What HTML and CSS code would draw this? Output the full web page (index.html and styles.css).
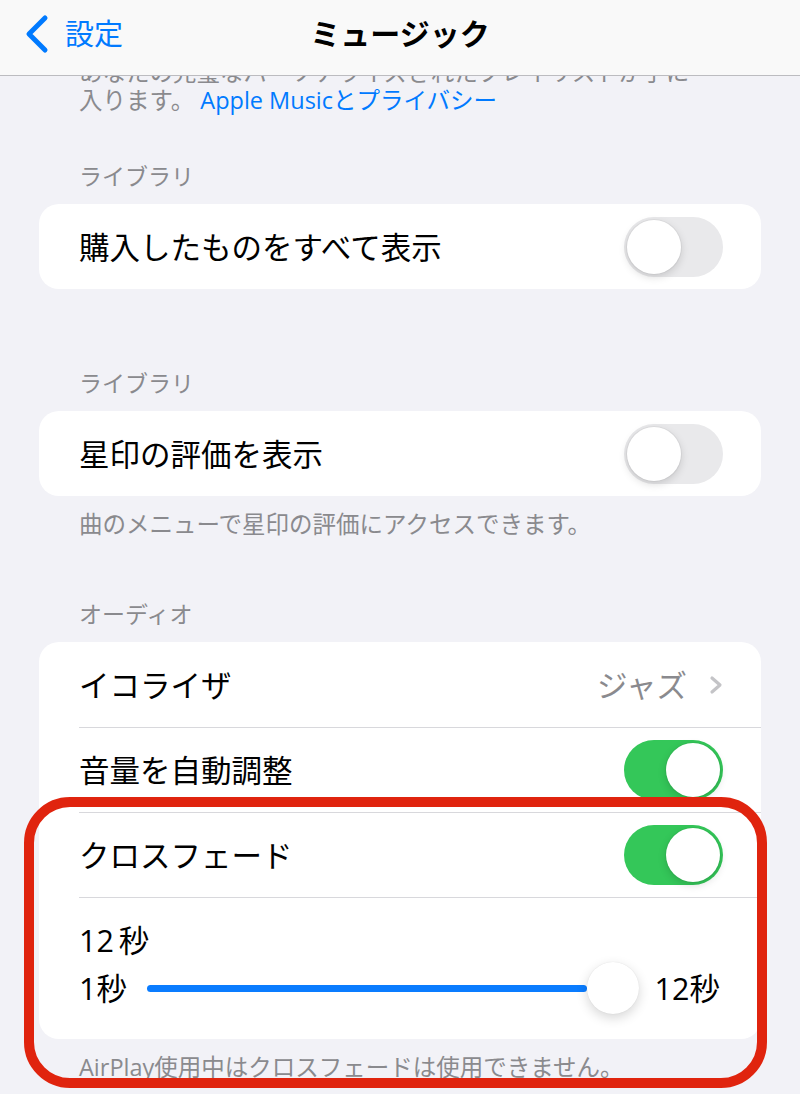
FILE: index.html
```html
<!DOCTYPE html>
<html lang="ja">
<head>
  <meta charset="UTF-8" />
  <title>ミュージック</title>
  <link rel="stylesheet" href="styles.css">
</head>
<body>
  <header class="nav">
    <a class="nav-back" href="#">
      <svg class="nav-chevron" width="26" height="40" viewBox="0 0 26 40">
        <path d="M21 4 L5 20 L21 36" fill="none" stroke="#007aff" stroke-width="5" stroke-linecap="round" stroke-linejoin="round"/>
      </svg>
      <span>設定</span>
    </a>
    <h1 class="nav-title">ミュージック</h1>
  </header>

  <main class="content">
    <p class="intro">
      あなたの完璧なパーソナライズされたプレイリストが手に<br>
      入ります。 <a class="link" href="#">Apple Musicとプライバシー</a>
    </p>

    <section class="group">
      <h2 class="group-header">ライブラリ</h2>
      <div class="card">
        <div class="row">
          <span class="row-label">購入したものをすべて表示</span>
          <span class="toggle"></span>
        </div>
      </div>
    </section>

    <section class="group group-spaced">
      <h2 class="group-header">ライブラリ</h2>
      <div class="card">
        <div class="row">
          <span class="row-label">星印の評価を表示</span>
          <span class="toggle"></span>
        </div>
      </div>
      <p class="group-footer">曲のメニューで星印の評価にアクセスできます。</p>
    </section>

    <section class="group">
      <h2 class="group-header">オーディオ</h2>
      <div class="card">
        <div class="row">
          <span class="row-label">イコライザ</span>
          <span class="row-value">
            ジャズ
            <svg width="14" height="20" viewBox="0 0 14 20">
              <path d="M3 3 L11 10 L3 17" fill="none" stroke="#c4c4c7" stroke-width="3.2" stroke-linecap="round" stroke-linejoin="round"/>
            </svg>
          </span>
        </div>
        <div class="row">
          <span class="row-label">音量を自動調整</span>
          <span class="toggle on"></span>
        </div>
        <div class="row">
          <span class="row-label">クロスフェード</span>
          <span class="toggle on"></span>
        </div>
        <div class="row slider-row">
          <div class="slider-value">12 秒</div>
          <div class="slider">
            <span class="slider-label">1秒</span>
            <div class="slider-track">
              <span class="slider-fill"></span>
              <span class="slider-knob"></span>
            </div>
            <span class="slider-label">12秒</span>
          </div>
        </div>
      </div>
      <p class="group-footer">AirPlay使用中はクロスフェードは使用できません。</p>
    </section>
  </main>

  <div class="annotation"></div>
</body>
</html>
```

FILE: styles.css
```css
* {
  box-sizing: border-box;
}

body {
  margin: 0;
  position: relative;
  font-family: "Open Sans", "Noto Sans CJK JP", sans-serif;
  background: #f2f2f7;
  color: #000;
  overflow: hidden;
}

/* top bar, sits over the scrolled content */
.nav {
  position: fixed;
  top: 0;
  left: 0;
  right: 0;
  z-index: 2;
  height: 76px;
  padding-bottom: 8px;
  display: grid;
  grid-template-columns: 1fr auto 1fr;
  align-items: center;
  background: #f9f9f9;
  border-bottom: 1px solid #bcbcc0;
}

.nav-back {
  display: flex;
  align-items: center;
  gap: 15px;
  padding-left: 24px;
  color: #007aff;
  text-decoration: none;
  font-size: 29px;
  line-height: 40px;
}

.nav-title {
  margin: 0;
  font-size: 30px;
  font-weight: 700;
  line-height: 40px;
}

.content {
  padding: 58px 39px 0;
}

.intro {
  margin: 0;
  padding-left: 40px;
  font-size: 23.5px;
  line-height: 28px;
  color: #8a8a8e;
  white-space: nowrap;
}

.link {
  color: #007aff;
  text-decoration: none;
}

.group {
  display: flex;
  flex-direction: column;
}

.group-header {
  margin: 47px 0 13px;
  padding-left: 40px;
  font-size: 23px;
  font-weight: 400;
  line-height: 30px;
  color: #8a8a8e;
}

.group-spaced {
  margin-top: 35px;
}

.group-footer {
  margin: 13px 0 0;
  padding: 0 0 16px 40px;
  font-size: 23.5px;
  line-height: 30px;
  color: #8a8a8e;
}

.group-spaced .group-header,
.group-spaced + .group .group-header {
  margin-top: 44px;
}

.card {
  background: #fff;
  border-radius: 20px;
  overflow: hidden;
}

.row {
  height: 85px;
  display: flex;
  align-items: center;
  justify-content: space-between;
  padding: 0 38px 0 40px;
  font-size: 30.5px;
  line-height: 40px;
}

.row + .row {
  margin-left: 40px;
  padding-left: 0;
  border-top: 1px solid #d8d8dc;
}

.row-value {
  display: flex;
  align-items: center;
  gap: 22px;
  color: #8a8a8e;
}

.toggle {
  width: 99px;
  height: 60px;
  padding: 3px;
  border-radius: 30px;
  background: #e9e9eb;
  display: flex;
  align-items: center;
}

.toggle::after {
  content: "";
  width: 54px;
  height: 54px;
  border-radius: 50%;
  background: #fff;
  box-shadow: 0 3px 8px rgba(0, 0, 0, 0.15), 0 0 0 1px rgba(0, 0, 0, 0.04);
}

.toggle.on {
  background: #34c759;
  justify-content: flex-end;
}

.slider-row {
  height: 142px;
  display: block;
  padding: 25px 41px 0 0;
}

.slider-value {
  line-height: 34px;
  word-spacing: -3px;
}

.slider {
  margin-top: 5px;
  height: 52px;
  display: flex;
  align-items: center;
}

.slider-track {
  flex: 1;
  display: flex;
  align-items: center;
  margin: 0 16px 0 20px;
}

.slider-fill {
  flex: 1;
  height: 7px;
  border-radius: 4px;
  background: #0a7cff;
}

.slider-knob {
  width: 52px;
  height: 52px;
  border-radius: 50%;
  background: #fff;
  box-shadow: 0 4px 12px rgba(0, 0, 0, 0.16), 0 0 1px rgba(0, 0, 0, 0.12);
}

/* red highlight drawn over the screenshot */
.annotation {
  position: absolute;
  left: 24px;
  top: 797px;
  width: 743px;
  height: 291px;
  border: 10px solid #e0240e;
  border-radius: 46px;
  pointer-events: none;
}
```
